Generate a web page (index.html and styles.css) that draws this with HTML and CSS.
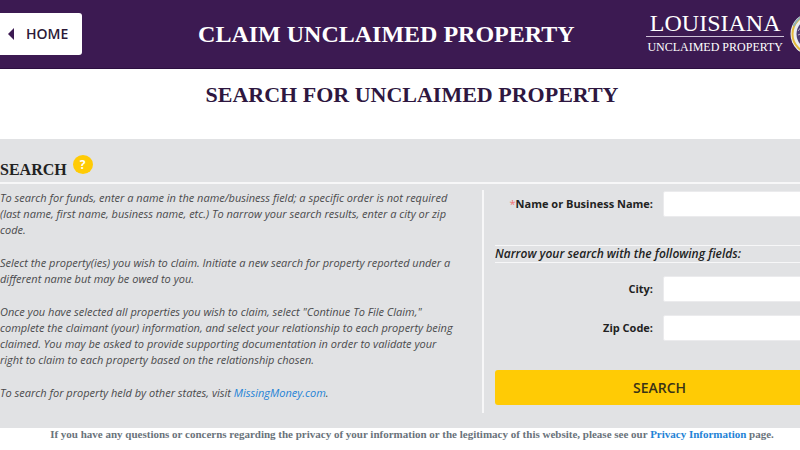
FILE: index.html
```html
<!DOCTYPE html>
<html lang="en">
<head>
  <meta charset="UTF-8">
  <meta name="viewport" content="width=device-width, initial-scale=1.0">
  <title>Claim Unclaimed Property</title>
  <link rel="stylesheet" href="styles.css">
</head>
<body>
  <div class="page">
    <header class="top-bar">
      <a href="#" class="home-link">
        <svg width="6" height="12" viewBox="0 0 6 12"><path d="M6 0v12L0 6z" fill="#3c1a52"/></svg>
        HOME
      </a>
      <h1>CLAIM UNCLAIMED PROPERTY</h1>
      <div class="logo">
        <div class="logo-text">
          <span class="logo-name">LOUISIANA</span>
          <span class="logo-sub">UNCLAIMED PROPERTY</span>
        </div>
        <svg class="seal" width="44" height="44" viewBox="0 0 44 44">
          <circle cx="22" cy="22" r="21.5" fill="#e9edf0"/>
          <circle cx="22" cy="22" r="19.5" fill="none" stroke="#e3b93c" stroke-width="2"/>
          <path d="M3.500 14A20 20 0 0 1 14 3.500" fill="none" stroke="#8fb0b5" stroke-width="2"/>
          <circle cx="22" cy="22" r="15.500" fill="#4a3a70"/>
          <path d="M8 19l4-5 2 3 4-5M8 23l5-2 1 4 5-3M10 30l4-3 2 3" fill="none" stroke="#b9b0c8" stroke-width="1"/>
        </svg>
      </div>
    </header>

    <h2 class="page-title">SEARCH FOR UNCLAIMED PROPERTY</h2>

    <main class="panel">
      <div class="panel-head">
        <h3>SEARCH</h3>
        <button type="button" class="help" aria-label="Help">?</button>
      </div>
      <div class="panel-body">
        <div class="intro">
          <p>To search for funds, enter a name in the name/business field; a specific order is not required (last name, first name, business name, etc.) To narrow your search results, enter a city or zip code.</p>
          <p>Select the property(ies) you wish to claim. Initiate a new search for property reported under a different name but may be owed to you.</p>
          <p>Once you have selected all properties you wish to claim, select "Continue To File Claim," complete the claimant (your) information, and select your relationship to each property being claimed. You may be asked to provide supporting documentation in order to validate your right to claim to each property based on the relationship chosen.</p>
          <p>To search for property held by other states, visit <a href="#">MissingMoney.com</a>.</p>
        </div>
        <form class="search-form">
          <div class="field">
            <label for="name"><span class="required">*</span>Name or Business Name:</label>
            <input type="text" id="name">
          </div>
          <p class="narrow">Narrow your search with the following fields:</p>
          <div class="field">
            <label for="city">City:</label>
            <input type="text" id="city">
          </div>
          <div class="field">
            <label for="zip">Zip Code:</label>
            <input type="text" id="zip">
          </div>
          <button type="button" class="search-button">SEARCH</button>
        </form>
      </div>
    </main>

    <footer>If you have any questions or concerns regarding the privacy of your information or the legitimacy of this website, please see our <a href="#">Privacy Information</a> page.</footer>
  </div>
</body>
</html>
```
FILE: styles.css
```css
:root {
  --purple: #3c1a52;
  --yellow: #ffcb05;
  --panel: #e1e2e4;
  --rule: #f7f7f8;
  --link: #1f83d6;
}

* {
  box-sizing: border-box;
}

body {
  margin: 0;
  overflow: hidden;
  font-family: "Open Sans", sans-serif;
  font-size: 11px;
  line-height: 16px;
  background: #fff;
  color: #222;
}

h1,
h2,
h3,
p {
  margin: 0;
}

h1,
h2,
h3,
footer,
.logo {
  font-family: "Liberation Serif", serif;
}

a {
  color: var(--link);
  text-decoration: none;
}

/* the page is a little wider than the window and runs off to the right */
.page {
  margin-right: -24px;
}

.top-bar {
  display: flex;
  align-items: center;
  height: 69px;
  background: var(--purple);
  border-bottom: 1px solid #2c0f40;
}

.home-link {
  display: flex;
  align-items: center;
  gap: 12px;
  height: 42px;
  padding: 0 14px 0 8px;
  border-radius: 0 3px 3px 0;
  background: #fff;
  color: #2b1a38;
  font-size: 14px;
  font-weight: 600;
}

.top-bar h1 {
  flex: 1;
  padding-left: 44px;
  text-align: center;
  color: #fff;
  font-size: 24px;
  line-height: 30px;
}

.logo {
  display: flex;
  align-items: center;
  gap: 6px;
  margin-right: -10px;
  color: #fff;
}

.logo-text {
  display: flex;
  flex-direction: column;
  padding-bottom: 4px;
  text-align: center;
}

.logo-name {
  border-bottom: 1px solid #cfc2d8;
  font-size: 24px;
  line-height: 26px;
}

.logo-sub {
  padding: 2px 1px 0;
  font-size: 12px;
  line-height: 16px;
}

.page-title {
  padding: 12px 0 31px;
  text-align: center;
  color: #2e1740;
  font-size: 22px;
  line-height: 27px;
}

.panel {
  padding-bottom: 15px;
  background: var(--panel);
}

.panel-head {
  display: flex;
  gap: 6px;
  height: 45px;
  padding-top: 16px;
  border-bottom: 2px solid var(--rule);
}

.panel-head h3 {
  padding-top: 5px;
  font-size: 16px;
  line-height: 20px;
}

.help {
  width: 20px;
  height: 19px;
  padding: 0;
  border: 0;
  border-radius: 50%;
  background: var(--yellow);
  color: #fff;
  font: 700 12px/19px "Open Sans", sans-serif;
}

.panel-body {
  display: flex;
  padding-top: 6px;
}

.intro {
  width: 484px;
  padding-right: 20px;
  border-right: 2px solid var(--rule);
  color: #4a4a4c;
  font-style: italic;
}

.intro p {
  margin-bottom: 17px;
}

.intro p:last-child {
  margin-bottom: 12px;
}

.search-form {
  flex: 1;
  padding: 1px 0 0 11px;
}

.field {
  display: grid;
  grid-template-columns: 158px 1fr;
  gap: 10px;
  align-items: center;
  margin-bottom: 13px;
}

.field label {
  text-align: right;
  font-weight: 700;
}

.required {
  color: #f27474;
  font-weight: 400;
}

.field input {
  width: 100%;
  height: 26px;
  border: 1px solid #ebebed;
  border-radius: 2px;
  background: #fff;
}

.narrow {
  margin: 28px 0 13px;
  border-top: 1px solid var(--rule);
  border-bottom: 1px solid var(--rule);
  font-size: 12px;
  font-style: italic;
  font-weight: 600;
}

.search-button {
  display: block;
  width: 100%;
  height: 35px;
  margin-top: 29px;
  border: 0;
  border-radius: 3px;
  background: var(--yellow);
  color: #3a3316;
  font: 600 14px/20px "Open Sans", sans-serif;
}

footer {
  text-align: center;
  color: #6a737b;
  font-size: 11px;
  font-weight: 700;
  line-height: 13px;
}
```
